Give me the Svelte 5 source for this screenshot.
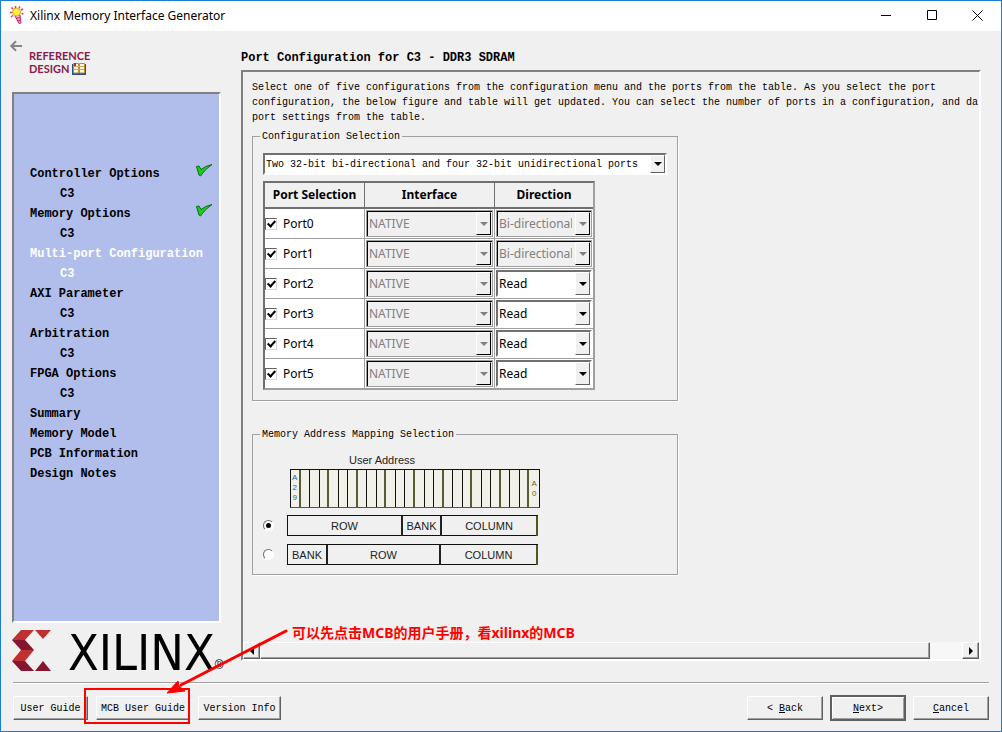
<script lang="ts">
  const steps = [
    { name: 'Controller Options', core: true, done: true },
    { name: 'Memory Options', core: true, done: true },
    { name: 'Multi-port Configuration', core: true, current: true },
    { name: 'AXI Parameter', core: true },
    { name: 'Arbitration', core: true },
    { name: 'FPGA Options', core: true },
    { name: 'Summary' },
    { name: 'Memory Model' },
    { name: 'PCB Information' },
    { name: 'Design Notes' }
  ];

  let ports = $state([
    { name: 'Port0', enabled: true, direction: 'Bi-directional', fixed: true },
    { name: 'Port1', enabled: true, direction: 'Bi-directional', fixed: true },
    { name: 'Port2', enabled: true, direction: 'Read', fixed: false },
    { name: 'Port3', enabled: true, direction: 'Read', fixed: false },
    { name: 'Port4', enabled: true, direction: 'Read', fixed: false },
    { name: 'Port5', enabled: true, direction: 'Read', fixed: false }
  ]);

  let mapping = $state('row-bank-column');
  const addressBits = Array.from({ length: 26 }, (_, i) => i);
</script>

{#snippet arrow()}
  <span class="arrow">
    <svg width="8" height="4" viewBox="0 0 8 4"><path d="M0 0h8L4 4z" fill="currentColor" /></svg>
  </span>
{/snippet}

<div class="window">
  <header class="titlebar">
    <svg class="app-icon" width="14" height="18" viewBox="0 0 14 18">
      <path d="M1.500 1.500l1.500 1.500M0 6.500h2M5.500 0v2M10 .5L9 2M13 3l-2 1M13.500 8l-2-.5M1 11l2-1.500" stroke="#d8367c" stroke-width="1.500" />
      <path d="M5 10l5-1 1 8-2 .5z" fill="#f0b4cf" stroke="#c0266a" />
      <path d="M6 12.500l4-1M7.500 15l3-1" stroke="#b52260" />
      <circle cx="6.500" cy="6" r="4" fill="#fff03c" stroke="#e59a30" />
    </svg>
    <h1>Xilinx Memory Interface Generator</h1>
    <div class="window-buttons">
      <button aria-label="Minimize">
        <svg width="11" height="11" viewBox="0 0 11 11"><path d="M0 5.500h10" stroke="#000" /></svg>
      </button>
      <button aria-label="Maximize">
        <svg width="11" height="11" viewBox="0 0 11 11"><path d="M.5.5h9v9h-9z" fill="none" stroke="#000" /></svg>
      </button>
      <button aria-label="Close">
        <svg width="11" height="11" viewBox="0 0 11 11"><path d="M.5.5l10 10M10.500.5l-10 10" stroke="#000" /></svg>
      </button>
    </div>
  </header>

  <main class="body">
    <aside class="side">
      <div class="side-head">
        <button class="back-arrow" aria-label="Go back">
          <svg width="12" height="10" viewBox="0 0 12 10"><path d="M12 5H1.500M6 .3L1.300 5 6 9.700" fill="none" stroke="#858585" stroke-width="2" /></svg>
        </button>
        <div class="reference">
          REFERENCE<br />DESIGN
          <svg width="14" height="12" viewBox="0 0 14 12">
            <path d="M0 1h14v11H0z" fill="#2d4f86" />
            <path d="M1.500.5h5v9.500h-5zM7.500.5h5v9.500h-5z" fill="#fff8e0" stroke="#b98a3c" />
            <path d="M2 3.500h10M2 6.500h10" stroke="#c9a566" />
            <path d="M2 0h2v3H2z" fill="#c8202c" />
          </svg>
        </div>
      </div>

      <nav class="steps">
        {#each steps as step}
          <div class="step" class:current={step.current}>
            <span>{step.name}</span>
            {#if step.done}
              <svg width="17" height="13" viewBox="0 0 17 13">
                <path d="M.5 2.500L3 2l2 3.500Q9 2 16 .5 9 5 4.500 12L3 11z" fill="#17cf17" stroke="#0b6a1c" />
              </svg>
            {/if}
          </div>
          {#if step.core}
            <div class="step core" class:current={step.current}>C3</div>
          {/if}
        {/each}
      </nav>

      <div class="logo">
        <svg width="42" height="41" viewBox="0 0 42 41">
          <path d="M9 0h13l-9 10H0z" fill="#c03030" />
          <path d="M0 10h13l9 10H9z" fill="#86162f" />
          <path d="M9 20h13l-9 11H0z" fill="#c03030" />
          <path d="M0 31h13l9 10H9z" fill="#86162f" />
          <path d="M23 0h16l-8 9z" fill="#c03030" />
          <path d="M23 41h16l-8-10z" fill="#86162f" />
        </svg>
        <span class="logo-name">XILINX</span>
        <span class="logo-mark">®</span>
      </div>
    </aside>

    <section class="content">
      <h2>Port Configuration for C3 - DDR3 SDRAM</h2>
      <div class="panel">
        <div class="panel-inner">
          <p>
            Select one of five configurations from the configuration menu and the ports from the table. As you select the port<br />
            configuration, the below figure and table will get updated. You can select the number of ports in a configuration, and da<br />
            port settings from the table.
          </p>

          <fieldset class="group config">
            <legend>Configuration Selection</legend>
            <div class="combo main-combo">
              <select aria-label="Configuration">
                <option>Two 32-bit bi-directional and four 32-bit unidirectional ports</option>
              </select>
              {@render arrow()}
            </div>

            <table>
              <thead>
                <tr><th class="col-port">Port Selection</th><th class="col-interface">Interface</th><th class="col-direction">Direction</th></tr>
              </thead>
              <tbody>
                {#each ports as port}
                  <tr>
                    <td class="port">
                      <label><input type="checkbox" bind:checked={port.enabled} />{port.name}</label>
                    </td>
                    <td>
                      <div class="combo locked">
                        <select disabled aria-label="{port.name} interface"><option>NATIVE</option></select>
                        {@render arrow()}
                      </div>
                    </td>
                    <td>
                      <div class="combo" class:locked={port.fixed}>
                        <select disabled={port.fixed} bind:value={port.direction} aria-label="{port.name} direction">
                          {#if port.fixed}
                            <option>Bi-directional</option>
                          {:else}
                            <option>Read</option>
                            <option>Write</option>
                          {/if}
                        </select>
                        {@render arrow()}
                      </div>
                    </td>
                  </tr>
                {/each}
              </tbody>
            </table>
          </fieldset>

          <fieldset class="group mapping">
            <legend>Memory Address Mapping Selection</legend>
            <div class="address-title">User Address</div>
            <div class="address">
              {#each addressBits as bit}
                <span>
                  {#if bit === 0}A<br />2<br />9{:else if bit === 25}A<br />0{/if}
                </span>
              {/each}
            </div>
            <label class="order">
              <input type="radio" name="mapping" value="row-bank-column" bind:group={mapping} />
              <span class="fields first"><b>ROW</b><b>BANK</b><b>COLUMN</b></span>
            </label>
            <label class="order">
              <input type="radio" name="mapping" value="bank-row-column" bind:group={mapping} />
              <span class="fields second"><b>BANK</b><b>ROW</b><b>COLUMN</b></span>
            </label>
          </fieldset>
        </div>

        <div class="scrollbar">
          <button aria-label="Scroll left"><svg width="4" height="8" viewBox="0 0 4 8"><path d="M4 0v8L0 4z" /></svg></button>
          <div class="thumb"></div>
          <div class="track"></div>
          <button aria-label="Scroll right"><svg width="4" height="8" viewBox="0 0 4 8"><path d="M0 0v8l4-4z" /></svg></button>
        </div>
      </div>
    </section>
  </main>

  <footer>
    <button class="btn guide">User Guide</button>
    <button class="btn mcb">MCB User Guide</button>
    <button class="btn version">Version Info</button>
    <span class="spacer"></span>
    <button class="btn nav">&lt; <u>B</u>ack</button>
    <button class="btn nav default"><u>N</u>ext&gt;</button>
    <button class="btn nav"><u>C</u>ancel</button>
  </footer>

  <div class="note">
    <svg width="205" height="96" viewBox="0 0 205 96">
      <path d="M2 61h104v34H2z" fill="none" stroke="#f00" stroke-width="2" />
      <path d="M203 3L98 57" stroke="#f00" stroke-width="3" stroke-linecap="round" />
      <path d="M84 65l11-12 1 5 6 5z" fill="#f00" stroke="#f00" />
    </svg>
    <span>可以先点击MCB的用户手册，看xilinx的MCB</span>
  </div>
</div>

<style>
  :global(body) {
    margin: 0;
    background: #f0f0f0;
  }

  .window {
    position: relative;
    display: flex;
    flex-direction: column;
    box-sizing: border-box;
    min-height: 100vh;
    border: 1px solid #1a7fd4;
    background: #f0f0f0;
    color: #000;
    font: 10px/15px "Liberation Mono", monospace;
  }

  button,
  select {
    margin: 0;
    padding: 0;
    border: 0;
    background: none;
    color: inherit;
    font: inherit;
  }

  svg {
    display: block;
    overflow: visible;
  }

  .titlebar {
    display: flex;
    align-items: center;
    height: 28px;
    padding: 0 2px 2px 9px;
    background: #fff;
    font-family: "Noto Sans", sans-serif;
  }

  h1 {
    flex: 1;
    margin: 0 0 0 6px;
    font-size: 12px;
    font-weight: 400;
  }

  .window-buttons {
    display: flex;
  }

  .window-buttons button {
    display: grid;
    place-items: center;
    width: 46px;
    height: 28px;
  }

  .window-buttons button:last-child {
    width: 44px;
  }

  .body {
    display: flex;
    flex: 1;
    gap: 20px;
    padding: 0 20px 0 11px;
  }

  .side {
    display: flex;
    flex-direction: column;
    flex: none;
    width: 209px;
  }

  .side-head {
    position: relative;
    height: 61px;
  }

  .back-arrow {
    position: absolute;
    top: 10px;
    left: -2px;
  }

  .reference {
    padding: 18px 0 0 17px;
    color: #8a1a4a;
    font: bold 11px/13px Lato, sans-serif;
  }

  .reference svg {
    display: inline-block;
    vertical-align: -2px;
  }

  .steps {
    flex: 1;
    padding: 70px 6px 0 16px;
    border: 2px solid;
    border-color: #808080 #fff #fff #808080;
    background: #b1beec;
    font-size: 12px;
    font-weight: bold;
  }

  .step {
    display: flex;
    justify-content: space-between;
    height: 20px;
    line-height: 20px;
    white-space: nowrap;
  }

  .step.core {
    padding-left: 30px;
  }

  .step.current {
    color: #fff;
  }

  .logo {
    display: flex;
    align-items: flex-end;
    height: 41px;
    padding: 7px 0 11px;
  }

  .logo-name {
    margin-left: 14px;
    font: 50px/36px "DejaVu Sans Condensed", "Liberation Sans", sans-serif;
  }

  .logo-mark {
    font: 12px/12px "Liberation Sans", sans-serif;
  }

  .content {
    display: flex;
    flex-direction: column;
    flex: 1;
    min-width: 0;
  }

  h2 {
    margin: 20px 0 4px;
    font-size: 12px;
    line-height: 15px;
  }

  .panel {
    display: flex;
    flex-direction: column;
    flex: 1;
    margin-bottom: 21px;
    border: 2px solid;
    border-color: #808080 #fff #fff #808080;
    overflow: hidden;
  }

  .panel-inner {
    flex: 1;
    padding: 8px 0 0 9px;
  }

  p {
    margin: 0;
    white-space: nowrap;
  }

  .group {
    box-sizing: border-box;
    max-width: 426px;
    min-width: 0;
    margin: 4px 0 0;
    padding: 0 10px;
    border: 1px solid #a0a0a0;
    box-shadow: 1px 1px #fff;
  }

  legend {
    margin-left: -3px;
    padding: 0 2px;
  }

  .config {
    padding-bottom: 10px;
  }

  .combo {
    display: grid;
    box-sizing: border-box;
    height: 27px;
    border: 2px solid;
    border-color: #707070 #fff #fff #707070;
    background: #fff;
  }

  .combo select {
    grid-area: 1 / 1;
    width: 100%;
    min-width: 0;
    padding: 0 18px 0 1px;
    appearance: none;
    outline: none;
    opacity: 1;
  }

  .arrow {
    display: grid;
    grid-area: 1 / 1;
    place-items: center;
    justify-self: end;
    width: 13px;
    border: 1px solid;
    border-color: #fff #606060 #606060 #fff;
    background: #f0f0f0;
    pointer-events: none;
  }

  .locked {
    padding: 1px;
    border: 1px solid #a0a0a0;
    box-shadow: inset 1px 1px #000;
    background: #f0f0f0;
    color: #808080;
  }

  .locked .arrow {
    border-color: #fff #000 #000 #fff;
  }

  .main-combo {
    height: 22px;
    margin: 9px 0 6px;
  }

  table {
    width: 332px;
    border: 2px solid;
    border-color: #707070 #a0a0a0 #a0a0a0 #707070;
    border-spacing: 0;
    table-layout: fixed;
    background: #fff;
    font: 12px/16px "Noto Sans", sans-serif;
  }

  th {
    height: 24px;
    padding: 0;
    border-right: 1px solid #707070;
    border-bottom: 2px solid #707070;
    background: #f0f0f0;
  }

  .col-port {
    width: 99px;
  }

  .col-interface {
    width: 129px;
  }

  td {
    height: 29px;
    padding: 0 1px;
    border-right: 1px solid #a0a0a0;
    border-bottom: 1px solid #a0a0a0;
  }

  th:last-child,
  td:last-child {
    border-right: 0;
  }

  tr:last-child td {
    border-bottom: 0;
  }

  .port {
    padding: 0;
  }

  .port label {
    display: flex;
    align-items: center;
    gap: 6px;
  }

  input {
    margin: 0;
    appearance: none;
  }

  input[type='checkbox'] {
    display: grid;
    place-items: center;
    box-sizing: border-box;
    width: 12px;
    height: 12px;
    border: 1px solid;
    border-color: #606060 #d8d8d8 #d8d8d8 #606060;
    background: #fff;
  }

  input[type='checkbox']:checked::before {
    width: 3px;
    height: 6px;
    margin-bottom: 2px;
    border: solid #000;
    border-width: 0 2px 2px 0;
    content: '';
    transform: rotate(42deg);
  }

  .mapping {
    margin-top: 26px;
    padding-bottom: 9px;
  }

  .address-title {
    width: 238px;
    margin: 11px 0 2px;
    color: #222;
    font: 11px/14px "Liberation Sans", sans-serif;
    text-align: center;
  }

  .address {
    display: grid;
    grid-template-columns: repeat(26, 1fr);
    box-sizing: border-box;
    width: 250px;
    height: 39px;
    margin-left: 27px;
    border: 1px solid #111;
    border-bottom-color: #5a5a30;
    background: #f1f1ea;
    font: 8px/10px "Liberation Sans", sans-serif;
    text-align: center;
  }

  .address span {
    padding-top: 3px;
    border-right: 1px solid #111;
  }

  .address span:nth-child(3n + 1) {
    border-right: 2px solid #5a5a35;
  }

  .address span:first-child {
    color: #2b5c9c;
  }

  .address span:last-child {
    padding-top: 9px;
    border-right: 0;
    color: #66661a;
  }

  .order {
    display: flex;
    align-items: center;
    gap: 13px;
    margin-top: 7px;
  }

  .order + .order {
    margin-top: 8px;
  }

  input[type='radio'] {
    display: grid;
    place-items: center;
    box-sizing: border-box;
    width: 11px;
    height: 11px;
    border: 1px solid;
    border-color: #707070 #fff #fff #707070;
    border-radius: 50%;
    background: #fff;
  }

  input[type='radio']:checked::before {
    width: 5px;
    height: 5px;
    border-radius: 50%;
    background: #000;
    content: '';
  }

  .fields {
    display: grid;
    box-sizing: border-box;
    width: 251px;
    height: 21px;
    border: 1px solid #111;
    border-right: 0;
    color: #222;
    font: 11px/20px "Liberation Sans", sans-serif;
    text-align: center;
  }

  .fields b {
    border-right: 2px solid #222;
    font-weight: 400;
  }

  .fields b:last-child {
    border-right-color: #4c5a1a;
  }

  .first {
    grid-template-columns: 115px 39px 1fr;
  }

  .second {
    grid-template-columns: 40px 113px 1fr;
  }

  .scrollbar {
    display: flex;
    height: 17px;
  }

  .scrollbar button,
  .thumb {
    box-sizing: border-box;
    border: 1px solid;
    border-color: #fff #606060 #606060 #fff;
    box-shadow: inset -1px -1px #a0a0a0;
  }

  .scrollbar button {
    display: grid;
    place-items: center;
    width: 17px;
  }

  .thumb {
    flex: 21;
  }

  .track {
    flex: 1;
    background: #f7f7f7;
  }

  footer {
    display: flex;
    align-items: center;
    height: 46px;
    margin: 0 12px;
    padding-top: 2px;
    border-top: 1px solid #a0a0a0;
    box-shadow: inset 0 1px #fff;
  }

  .btn {
    box-sizing: border-box;
    height: 24px;
    border: 1px solid;
    border-color: #fff #606060 #606060 #fff;
    box-shadow: inset -1px -1px #a0a0a0;
    white-space: nowrap;
  }

  .guide {
    width: 75px;
  }

  .mcb {
    width: 94px;
    margin: 0 8px;
  }

  .version {
    width: 83px;
  }

  .spacer {
    flex: 1;
  }

  .nav {
    width: 76px;
    margin-left: 7px;
  }

  .default {
    height: 26px;
    border: 2px solid #606060;
    box-shadow: inset 1px 1px #fff, inset -1px -1px #a0a0a0;
  }

  .note {
    position: absolute;
    bottom: 7px;
    left: 82px;
    display: flex;
    gap: 4px;
    color: #f00;
    font: bold 14px/10px "Noto Sans", "Noto Sans CJK SC", sans-serif;
    pointer-events: none;
  }
</style>
